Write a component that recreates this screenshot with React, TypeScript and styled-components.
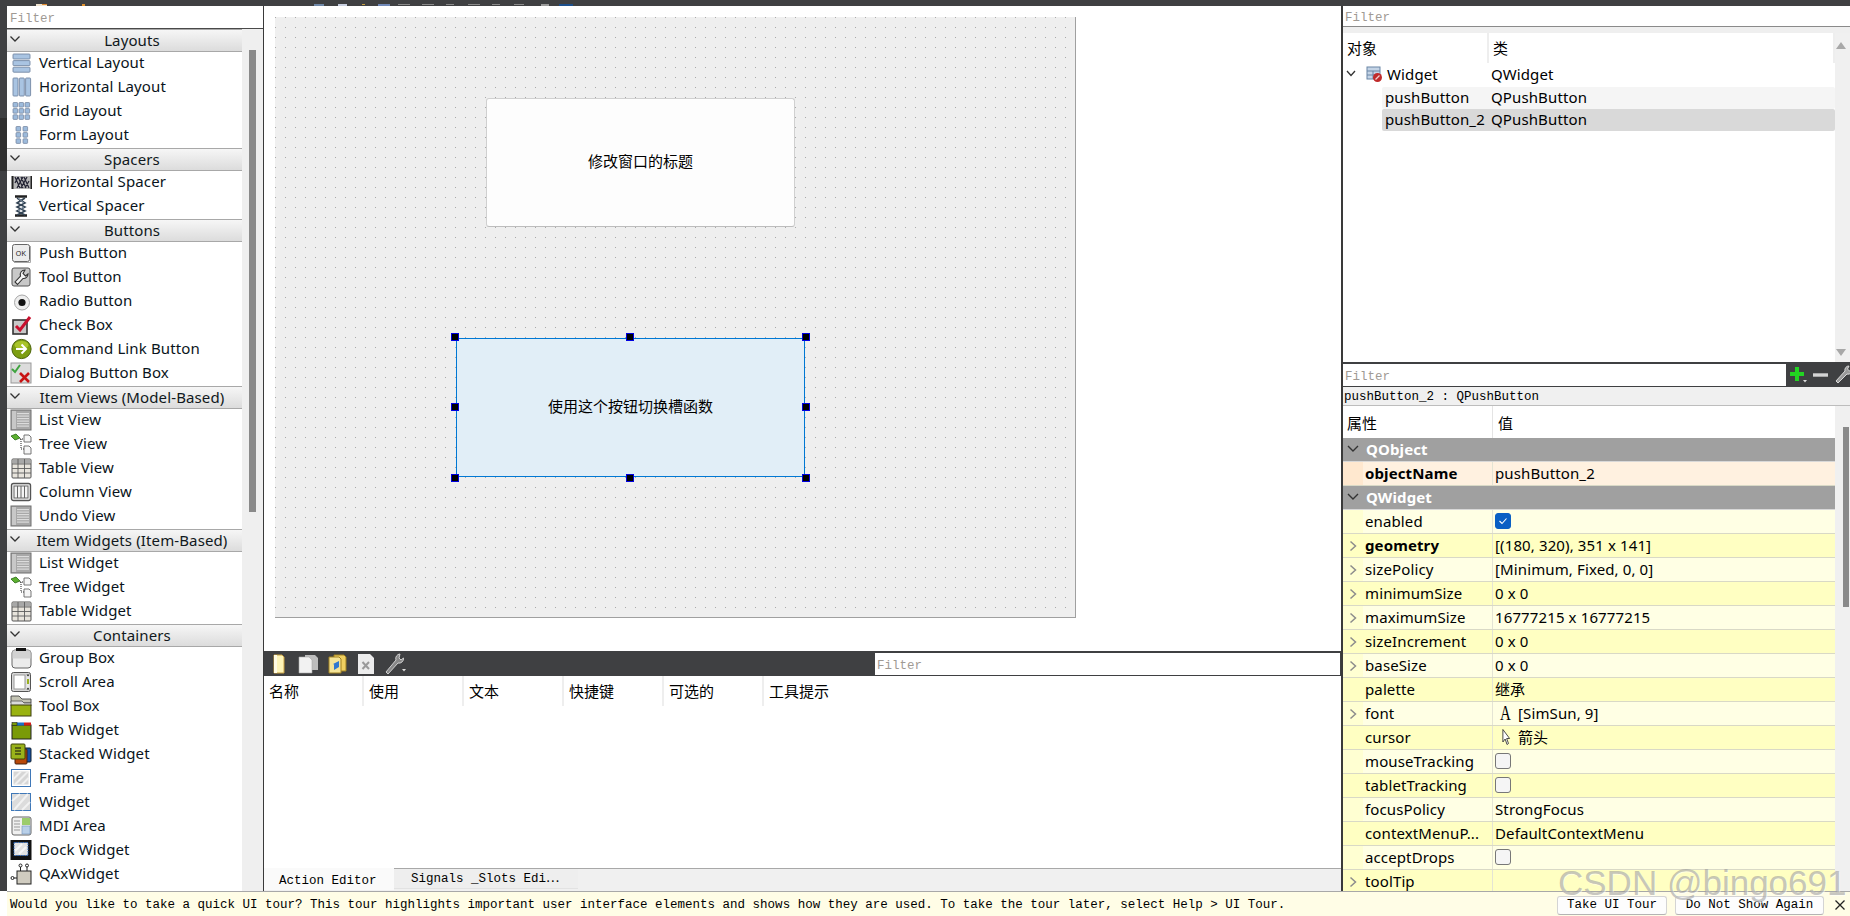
import React from 'react';
import styled, { createGlobalStyle } from 'styled-components';

const UI = `"Noto Sans", "Noto Sans CJK SC", sans-serif`;
const MONO = `"Liberation Mono", "Noto Sans CJK SC", monospace`;
const CJK = `"Noto Sans CJK SC", sans-serif`;

const Global = createGlobalStyle`
  html, body { margin: 0; padding: 0; background: #fff; overflow: hidden; }
  * { box-sizing: border-box; }
`;

const Page = styled.div`
  position: relative;
  width: 1850px;
  height: 916px;
  display: flex;
  flex-direction: column;
  overflow: hidden;
  background: #fff;
  color: #000;
  font: 15px/20px ${UI};
  letter-spacing: 0.12px;
`;
const TopBar = styled.div`
  height: 6px;
  flex: none;
  background: #3f4042;
  line-height: 0;
`;
const Body = styled.div`
  height: 885px;
  flex: none;
  display: flex;
`;
const Strip = styled.div`
  width: 7px;
  flex: none;
  background: linear-gradient(#3f4042 0 112px, #2f2f2f 112px 165px, #3f4042 165px);
`;

/* Widget box */
const WidgetBox = styled.aside`
  width: 257px;
  flex: none;
  display: flex;
  flex-direction: column;
  border-right: 1px solid #3a3a3a;
  background: #fff;
`;
const FilterInput = styled.input`
  display: block;
  width: 100%;
  height: 100%;
  border: 0;
  outline: 0;
  padding: 3px 0 0 2px;
  background: #fff;
  font: 12.5px ${MONO};
  letter-spacing: 0;
  &::placeholder { color: #a09a94; opacity: 1; }
`;
const BoxFilter = styled.div`
  height: 22px;
  flex: none;
  padding-left: 1px;
  border-bottom: 1px solid #4a4a4a;
  margin-top: 1px;
`;
const BoxBody = styled.div`
  flex: 1;
  display: flex;
  min-height: 0;
`;
const BoxList = styled.div`
  width: 235px;
  flex: none;
`;
const BoxScroll = styled.div`
  flex: 1;
  background: #efefef;
  padding: 21px 7px 0 7px;
`;
const Thumb = styled.div<{ $h: number }>`
  height: ${p => p.$h}px;
  background: #8a8a8a;
`;
const CategoryHead = styled.div`
  height: 23px;
  display: flex;
  align-items: center;
  background: linear-gradient(#f6f6f6, #dcdcdc);
  border-top: 1px solid #a8a8a8;
  border-bottom: 1px solid #a8a8a8;
  color: #101820;
`;
const Chevron = styled.svg`
  width: 15px;
  height: 12px;
  flex: none;
  margin-top: -3px;
`;
const CategoryTitle = styled.span`
  flex: 1;
  text-align: center;
  margin-bottom: 2px;
`;
const ToolRow = styled.div`
  height: 24px;
  display: flex;
  align-items: center;
  padding-left: 3px;
  gap: 7px;
  color: #0a1420;
  white-space: nowrap;
`;
const ToolLabel = styled.span`
  margin-bottom: 4px;
`;
const IconBox = styled.svg`
  width: 22px;
  height: 22px;
  flex: none;
  margin-bottom: 2px;
`;

/* Center */
const Center = styled.main`
  width: 1077px;
  flex: none;
  display: flex;
  flex-direction: column;
`;
const FormArea = styled.div`
  height: 645px;
  flex: none;
  padding: 11px 0 0 11px;
`;
const Form = styled.div`
  position: relative;
  width: 801px;
  height: 601px;
  background-color: #efefef;
  background-image: conic-gradient(at 1px 1px, #efefef 75%, #a9a9a9 0);
  background-size: 10px 10px;
  border-right: 1px solid #a0a0a0;
  border-bottom: 1px solid #a0a0a0;
`;
const FormButton = styled.div<{ $x: number; $y: number; $w: number; $h: number; $selected?: boolean }>`
  position: absolute;
  left: ${p => p.$x}px;
  top: ${p => p.$y}px;
  width: ${p => p.$w}px;
  height: ${p => p.$h}px;
  display: flex;
  align-items: center;
  justify-content: center;
  padding-bottom: 4px;
  font: 15px/20px ${CJK};
  letter-spacing: 0;
  border-radius: ${p => (p.$selected ? 0 : 3)}px;
  border: 1px solid ${p => (p.$selected ? '#0078d4' : '#d0d0d0')};
  border-bottom-color: ${p => (p.$selected ? '#0078d4' : '#bdbdbd')};
  background: ${p => (p.$selected ? '#e1eef7' : '#fdfdfd')};
`;
const Handle = styled.span<{ $x: number; $y: number }>`
  position: absolute;
  left: ${p => p.$x - 3}px;
  top: ${p => p.$y - 3}px;
  width: 6px;
  height: 6px;
  background: #000;
  outline: 1px solid #0000e0;
`;
const ActionEditor = styled.section`
  flex: 1;
  display: flex;
  flex-direction: column;
  min-height: 0;
`;
const ActionBar = styled.div`
  height: 25px;
  flex: none;
  display: flex;
  align-items: stretch;
  background: #3f4042;
  padding-top: 2px;
  border-bottom: 1px solid #3f4042;
`;
const ActionTools = styled.div`
  width: 611px;
  flex: none;
  display: flex;
  align-items: center;
  gap: 7px;
  padding-left: 4px;
`;
const ToolIcon = styled.svg`
  width: 22px;
  height: 22px;
  flex: none;
`;
const ActionFilter = styled.div`
  flex: 1;
  margin-right: 1px;
`;
const ColumnHead = styled.div`
  height: 30px;
  flex: none;
  display: flex;
`;
const ColumnCell = styled.div<{ $last?: boolean }>`
  width: 100px;
  flex: none;
  padding: 5px 0 0 5px;
  border-right: 2px solid ${p => (p.$last ? 'transparent' : '#eeeeee')};
  font-family: ${CJK};
  font-size: 15px;
  letter-spacing: 0;
  line-height: 20px;
`;
const ActionEmpty = styled.div`
  flex: 1;
`;
const TabBar = styled.div`
  height: 23px;
  flex: none;
  display: flex;
  background: #f0f0f0;
  border-top: 1px solid #a8a8a8;
  font: 12.5px/20px ${MONO};
  letter-spacing: 0;
`;
const Tab = styled.div<{ $active?: boolean; $w: number }>`
  width: ${p => p.$w}px;
  height: ${p => (p.$active ? 22 : 20)}px;
  margin-top: ${p => (p.$active ? -1 : 0)}px;
  padding: ${p => (p.$active ? 3 : 0)}px 0 0 ${p => (p.$active ? 15 : 17)}px;
  background: ${p => (p.$active ? '#fafafa' : '#eeeeee')};
  border-bottom: ${p => (p.$active ? 0 : 1)}px solid #e2e2e2;
  white-space: nowrap;
`;

/* Right column */
const RightCol = styled.aside`
  flex: 1;
  min-width: 0;
  display: flex;
  flex-direction: column;
  border-left: 2px solid #3a3a3a;
`;
const InspectorFilter = styled.div`
  height: 21px;
  flex: none;
  border-bottom: 1px solid #8a8a8a;
`;
const InspectorGap = styled.div`
  height: 6px;
  flex: none;
  background: #efefef;
`;
const Inspector = styled.div`
  height: 331px;
  flex: none;
  display: flex;
  border-bottom: 2px solid #3f4042;
`;
const TreePane = styled.div`
  width: 492px;
  flex: none;
`;
const Scroll = styled.div`
  flex: 1;
  position: relative;
  background: #f0f0f0;
`;
const Arrow = styled.span<{ $down?: boolean }>`
  position: absolute;
  left: 1px;
  ${p => (p.$down ? 'bottom: 6px;' : 'top: 9px;')}
  width: 0;
  height: 0;
  border-left: 5px solid transparent;
  border-right: 5px solid transparent;
  ${p => (p.$down ? 'border-top: 7px solid #a8a8a8;' : 'border-bottom: 7px solid #a8a8a8;')}
`;
const PropThumb = styled.div`
  position: absolute;
  left: 8px;
  top: 21px;
  width: 6px;
  height: 180px;
  background: #8a8a8a;
`;
const TreeHead = styled.div`
  height: 30px;
  display: flex;
  font-family: ${CJK};
`;
const TreeHeadCell = styled.div<{ $w: number; $pad: number }>`
  width: ${p => p.$w}px;
  flex: none;
  padding: 5px 0 0 ${p => p.$pad}px;
  border-right: 2px solid #eeeeee;
  font-size: 15px;
  letter-spacing: 0;
`;
const TreeRow = styled.div<{ $bg?: string; $indent: number; $h?: number; $pad?: number }>`
  height: ${p => p.$h ?? 22}px;
  margin-left: ${p => p.$indent}px;
  padding: 0 0 2px ${p => p.$pad ?? 0}px;
  display: flex;
  align-items: center;
  background: ${p => p.$bg || 'transparent'};
  border-radius: 2px;
  white-space: nowrap;
`;
const TreeName = styled.span<{ $w: number }>`
  width: ${p => p.$w}px;
  flex: none;
`;
const TreeExpand = styled.svg`
  width: 12px;
  height: 10px;
  flex: none;
  margin: 0 8px 0 2px;
`;
const TreeIcon = styled.svg`
  width: 18px;
  height: 18px;
  flex: none;
  margin-right: 4px;
`;
const PropToolbar = styled.div`
  height: 23px;
  flex: none;
  display: flex;
  background: #3f4042;
  border-bottom: 1px solid #3f4042;
`;
const PropFilter = styled.div`
  width: 443px;
  flex: none;
`;
const PropTools = styled.div`
  flex: 1;
  display: flex;
  align-items: center;
  gap: 3px;
  padding-left: 2px;
  overflow: hidden;
`;
const PropIcon = styled.svg`
  width: 20px;
  height: 20px;
  flex: none;
`;
const PropLabel = styled.div`
  height: 19px;
  flex: none;
  padding: 2px 0 0 1px;
  background: #f0f0f0;
  border-bottom: 1px solid #bdbdbd;
  font: 12.5px/16px ${MONO};
  letter-spacing: 0;
  white-space: nowrap;
`;
const PropBody = styled.div`
  flex: 1;
  min-height: 0;
  display: flex;
  overflow: hidden;
`;
const PropPane = styled.div`
  width: 492px;
  flex: none;
`;
const PropHead = styled.div`
  height: 32px;
  display: flex;
  font-family: ${CJK};
  font-size: 15px;
  letter-spacing: 0;
`;
const PropHeadCell = styled.div<{ $w?: number; $pad: number }>`
  ${p => (p.$w ? `width: ${p.$w}px; flex: none; border-right: 1px solid #e4e4e4;` : 'flex: 1;')}
  padding: 7px 0 0 ${p => p.$pad}px;
`;
const Section = styled.div`
  height: 24px;
  display: flex;
  align-items: center;
  background: #a0a0a0;
  border-bottom: 1px solid #d8d8d8;
  color: #fff;
  font-weight: 700;
  padding-bottom: 1px;
`;
const SectionChevron = styled.svg`
  width: 20px;
  height: 10px;
  flex: none;
  margin-right: 3px;
`;
const PropRow = styled.div<{ $bg: string }>`
  height: 24px;
  display: flex;
  background: ${p => p.$bg};
  border-bottom: 1px solid #d9d9c6;
`;
const Gutter = styled.div<{ $bg: string }>`
  width: 20px;
  flex: none;
  display: flex;
  align-items: center;
  justify-content: center;
  background: ${p => p.$bg};
`;
const PropName = styled.div<{ $bold?: boolean }>`
  width: 130px;
  flex: none;
  padding-left: 2px;
  border-right: 1px solid #e4e4d4;
  line-height: 22px;
  white-space: nowrap;
  overflow: hidden;
  font-weight: ${p => (p.$bold ? 700 : 400)};
`;
const PropValue = styled.div`
  flex: 1;
  display: flex;
  align-items: center;
  padding-left: 2px;
  padding-bottom: 1px;
  white-space: nowrap;
`;
const Check = styled.span<{ $on?: boolean }>`
  width: 16px;
  height: 16px;
  display: inline-flex;
  align-items: center;
  justify-content: center;
  border-radius: 3px;
  background: ${p => (p.$on ? '#0a5fc4' : '#f5f5f5')};
  border: 1px solid ${p => (p.$on ? '#0a5fc4' : '#777')};
`;
const ValueGlyph = styled.span`
  width: 21px;
  flex: none;
  display: inline-flex;
  justify-content: center;
  margin-right: 2px;
  font: 20px/20px "Liberation Serif", serif;
  transform: scaleX(0.75);
`;

/* Tour bar */
const TourBar = styled.footer`
  height: 25px;
  flex: none;
  margin-left: 7px;
  display: flex;
  align-items: center;
  background: #fffde6;
  border-top: 1px solid #a8a8a8;
  padding: 2px 0 0 3px;
  font: 12.5px/20px ${MONO};
  letter-spacing: 0;
  white-space: nowrap;
`;
const TourText = styled.span`
  flex: 1;
`;
const TourButton = styled.span<{ $w: number; $gap: number }>`
  width: ${p => p.$w}px;
  height: 19px;
  margin-right: ${p => p.$gap}px;
  display: inline-flex;
  align-items: center;
  justify-content: center;
  background: #fdfdfd;
  border: 1px solid #d4d4d4;
  border-bottom-color: #b4b4b4;
  border-radius: 3px;
`;
const TourClose = styled.svg`
  width: 12px;
  height: 12px;
  margin-right: 4px;
  flex: none;
`;
const Watermark = styled.div`
  position: absolute;
  left: 1558px;
  top: 865px;
  font: 35px/36px "Liberation Sans", sans-serif;
  letter-spacing: 0;
  color: rgba(150, 150, 150, 0.55);
  text-shadow: 1px 1px 0 rgba(255, 255, 255, 0.5);
  white-space: nowrap;
  pointer-events: none;
`;

const ChevronDown = ({ color = '#333' }: { color?: string }) => (
  <Chevron viewBox="0 0 15 12"><path d="M3.5 3.5 L8 8 L12.5 3.5" fill="none" stroke={color} strokeWidth="1.3" /></Chevron>
);
const ChevronRight = () => (
  <svg width="8" height="12" viewBox="0 0 8 12"><path d="M1.5 1.5 L6.5 6 L1.5 10.5" fill="none" stroke="#8c8c8c" strokeWidth="1.5" /></svg>
);

const listLines = (
  <g>
    <rect x="1" y="1" width="20" height="20" fill="#a8a8a8" stroke="#6e6e6e" />
    <rect x="2" y="2" width="4" height="18" fill="#c8c8c8" />
    {[4, 6.5, 9, 11.5, 14, 16.5].map(y => <rect key={y} x="7" y={y} width="12" height="1.2" fill="#dcdcdc" />)}
  </g>
);
const treeArt = (
  <g>
    <path d="M1 3 L6 1 L10 5 L5 7 Z" fill="#5cb030" stroke="#2b6a16" strokeWidth="0.8" />
    <path d="M10 6 H13 M11 6 V16 M11 16 H14" stroke="#222" strokeWidth="1" strokeDasharray="1 1" fill="none" />
    <path d="M14 2 H19 L21 4 V9 H14 Z M14 13 H19 L21 15 V21 H14 Z" fill="#f6f6f6" stroke="#666" strokeWidth="0.9" />
  </g>
);
const tableArt = (
  <g>
    <rect x="2" y="2" width="19" height="19" rx="1" fill="#e8e4dc" stroke="#555" />
    <rect x="2.5" y="2.5" width="18" height="4" fill="#a8a8a8" />
    <path d="M2 7 H21 M2 11.5 H21 M2 16 H21 M8 2 V21 M14.5 2 V21" stroke="#5c5c5c" strokeWidth="0.9" />
  </g>
);
const squares = (xs: number[], ys: number[], s: number) => (
  <g>
    {xs.map(x => ys.map(y => <rect key={`${x}-${y}`} x={x} y={y} width={s} height={s} rx="0.7" fill="#9dbbdc" stroke="#70809a" strokeWidth="0.7" />))}
  </g>
);

const ICONS: Record<string, React.ReactNode> = {
  vlayout: (
    <g fill="#a9c4e2" stroke="#7488a4" strokeWidth="0.9">
      <rect x="3" y="2" width="17" height="5" rx="0.8" />
      <rect x="3" y="8.6" width="17" height="5" rx="0.8" />
      <rect x="3" y="15.2" width="17" height="5" rx="0.8" />
    </g>
  ),
  hlayout: (
    <g fill="#a9c4e2" stroke="#7488a4" strokeWidth="0.9">
      <rect x="3" y="2" width="5" height="18" rx="0.8" />
      <rect x="9.3" y="2" width="5" height="18" rx="0.8" />
      <rect x="15.6" y="2" width="5" height="18" rx="0.8" />
    </g>
  ),
  grid: squares([3, 9, 15], [2.5, 8.6, 14.8], 4.6),
  form: squares([6, 13], [2.5, 8.6, 14.8], 4.6),
  hspacer: (
    <g>
      <rect x="2" y="5" width="20" height="13" fill="#b8b8b8" />
      <path d="M2.5 5 V18 M21.5 5 V18" stroke="#222" strokeWidth="2" />
      <path d="M5 6 L10 17 M8 6 L13 17 M11 6 L16 17 M14 6 L19 17 M5 12 L8 6 M7 17 L13 6 M11 17 L17 6 M15 17 L19 10" stroke="#223" strokeWidth="1.2" fill="none" />
    </g>
  ),
  vspacer: (
    <g>
      <path d="M5 1.5 H17 M5 20.5 H17" stroke="#222" strokeWidth="2.4" />
      <path d="M7 3 L15 8 L7 12 L15 16 L7 20 M15 3 L7 8 L15 12 L7 16 L15 20" stroke="#345" strokeWidth="1.6" fill="none" />
      <path d="M8 3 L14 8 M14 12 L8 16" stroke="#9ab" strokeWidth="0.8" fill="none" />
    </g>
  ),
  push: (
    <g>
      <rect x="2.5" y="2.5" width="17" height="17" rx="2" fill="#ececec" stroke="#666" />
      <path d="M20.5 4 V20.5 H4" stroke="#aaa" fill="none" />
      <text x="11" y="14" textAnchor="middle" fontFamily="Liberation Sans" fontSize="7" fill="#222">OK</text>
    </g>
  ),
  tool: (
    <g>
      <rect x="2" y="2" width="18" height="18" rx="2" fill="#c8c8c8" stroke="#555" />
      <path d="M15 4 A4.5 4.5 0 0 0 10.5 10 L5 16 L7.5 18.5 L13 12.5 A4.5 4.5 0 0 0 18 8 L15.5 10 L13 7.5 Z" fill="#f4f4f4" stroke="#333" strokeWidth="1.1" />
    </g>
  ),
  radio: (
    <g>
      <circle cx="12" cy="12.5" r="7.5" fill="#eeeeee" stroke="#a8a8a8" />
      <circle cx="12" cy="12.5" r="3.6" fill="#111" />
    </g>
  ),
  check: (
    <g>
      <rect x="3" y="6" width="14" height="14" fill="#c8c8c8" stroke="#333" strokeWidth="1.6" />
      <path d="M6 12 L10 16 L20 3" fill="none" stroke="#c8102e" strokeWidth="3" />
    </g>
  ),
  link: (
    <g>
      <circle cx="11.5" cy="11" r="9.6" fill="#7d9e12" stroke="#4a6207" />
      <ellipse cx="11.5" cy="7" rx="7" ry="4" fill="#a9c42a" />
      <path d="M6 11 H15.5 M11.5 6.5 L16 11 L11.5 15.5" fill="none" stroke="#fff" strokeWidth="2" />
    </g>
  ),
  dialog: (
    <g>
      <rect x="1" y="1" width="20" height="20" fill="#dcdcdc" stroke="#999" />
      <path d="M2 7 L5 10 L10 3" fill="none" stroke="#3fa43f" strokeWidth="2" />
      <path d="M10 11 L19 20 M19 11 L10 20" stroke="#c81414" strokeWidth="2.6" />
    </g>
  ),
  list: listLines,
  tree: treeArt,
  table: tableArt,
  column: (
    <g>
      <rect x="1.5" y="2.5" width="19" height="17" rx="2" fill="#f4f4f4" stroke="#555" strokeWidth="1.4" />
      <path d="M7.5 5 V17 M11 5 V17 M14.5 5 V17" stroke="#666" />
      <rect x="4" y="5" width="14" height="12" fill="none" stroke="#666" />
    </g>
  ),
  group: (
    <g>
      <rect x="2" y="3" width="19" height="18" rx="3" fill="#ececec" stroke="#666" />
      <rect x="2.5" y="3.5" width="18" height="8" fill="#d2d2d2" />
      <rect x="6" y="1" width="10" height="3" fill="#111" />
    </g>
  ),
  scroll: (
    <g>
      <rect x="1.5" y="1.5" width="19" height="19" rx="2" fill="#d8d8d8" stroke="#555" />
      <rect x="4" y="4" width="11" height="14" fill="#fff" stroke="#999" />
      <rect x="16.5" y="5" width="3" height="12" fill="#e8e8e8" />
      <path d="M18 8 V13" stroke="#9ab020" strokeWidth="2" />
      <path d="M16.5 3.5 H19.5 L18 5.5 Z M16.5 18.5 H19.5 L18 16.5 Z" fill="#222" />
    </g>
  ),
  toolbox: (
    <g>
      <path d="M1 1 H9 L12 4 H21 V8 H1 Z" fill="#c4c4b4" stroke="#444" strokeWidth="0.9" />
      <path d="M1 6 H12 L14 8 H21 V11 H1 Z" fill="#dadada" stroke="#555" strokeWidth="0.8" />
      <rect x="1" y="10" width="20" height="11" fill="#99b210" stroke="#3c3c10" />
    </g>
  ),
  tab: (
    <g>
      <rect x="2" y="6" width="19" height="14" fill="#7a9a08" stroke="#222" />
      <rect x="7" y="3.5" width="7" height="3" fill="#1d6fc8" />
      <rect x="14" y="3.5" width="7" height="3" fill="#d2201c" />
      <rect x="2" y="3.5" width="5" height="3" fill="#7a9a08" stroke="#222" strokeWidth="0.6" />
    </g>
  ),
  stacked: (
    <g>
      <rect x="10" y="5" width="11" height="14" rx="1" fill="#1450a8" stroke="#123" />
      <rect x="5" y="6" width="12" height="15" rx="1" fill="#b84808" stroke="#421" />
      <rect x="1" y="1" width="14" height="15" rx="1" fill="#9ab31a" stroke="#3c4408" />
      <path d="M5 5 H11 M5 8 H11 M5 11 H11" stroke="#111" strokeWidth="1.2" />
    </g>
  ),
  frame: (
    <g>
      <rect x="1.5" y="2.5" width="19" height="17" fill="#fff" stroke="#3f78b8" />
      <rect x="3.5" y="4.5" width="15" height="13" fill="#d6d6d6" />
      <path d="M3.5 12 L11 4.5 M5 17.5 L18 4.5 M12 17.5 L18.5 11" stroke="#f0f0f0" strokeWidth="2" />
    </g>
  ),
  widget: (
    <g>
      <rect x="1.5" y="2.5" width="19" height="17" fill="#dcdcdc" stroke="#3f78b8" />
      <path d="M2 10 L10 3 M4 19 L18 3 M12 19 L20 11" stroke="#f2f2f2" strokeWidth="2" />
    </g>
  ),
  mdi: (
    <g>
      <rect x="2" y="2" width="19" height="18" rx="2" fill="#f0f0f0" stroke="#666" />
      <rect x="12" y="3" width="8" height="7" fill="#9ccc6c" />
      <rect x="12" y="11" width="8" height="8" fill="#b8cfe8" stroke="#6f90b8" strokeWidth="0.6" />
      <path d="M4 6 H10 M4 9 H10 M4 12 H10 M4 15 H10" stroke="#999" />
    </g>
  ),
  dock: (
    <g>
      <rect x="0.5" y="1" width="21" height="20" fill="#111" />
      <rect x="4" y="3.5" width="14" height="13" fill="#e2e2e2" stroke="#2b62b0" strokeDasharray="1.5 1" />
      <path d="M5 12 L12 5 M9 15 L16 8" stroke="#f6f6f6" strokeWidth="2" />
    </g>
  ),
  qax: (
    <g>
      <rect x="7" y="8" width="14" height="13" fill="#d0ccc0" stroke="#222" />
      <path d="M10.5 8 V3 M17 8 V3" stroke="#222" />
      <circle cx="10.5" cy="2.5" r="1.5" fill="#fff" stroke="#222" />
      <circle cx="17" cy="2.5" r="1.5" fill="#fff" stroke="#222" />
      <path d="M7 15 H3" stroke="#222" />
      <circle cx="2.5" cy="15" r="1.5" fill="#fff" stroke="#222" />
    </g>
  ),
};

const CATEGORIES: { title: string; items: [string, string][] }[] = [
  { title: 'Layouts', items: [['vlayout', 'Vertical Layout'], ['hlayout', 'Horizontal Layout'], ['grid', 'Grid Layout'], ['form', 'Form Layout']] },
  { title: 'Spacers', items: [['hspacer', 'Horizontal Spacer'], ['vspacer', 'Vertical Spacer']] },
  { title: 'Buttons', items: [['push', 'Push Button'], ['tool', 'Tool Button'], ['radio', 'Radio Button'], ['check', 'Check Box'], ['link', 'Command Link Button'], ['dialog', 'Dialog Button Box']] },
  { title: 'Item Views (Model-Based)', items: [['list', 'List View'], ['tree', 'Tree View'], ['table', 'Table View'], ['column', 'Column View'], ['list', 'Undo View']] },
  { title: 'Item Widgets (Item-Based)', items: [['list', 'List Widget'], ['tree', 'Tree Widget'], ['table', 'Table Widget']] },
  { title: 'Containers', items: [['group', 'Group Box'], ['scroll', 'Scroll Area'], ['toolbox', 'Tool Box'], ['tab', 'Tab Widget'], ['stacked', 'Stacked Widget'], ['frame', 'Frame'], ['widget', 'Widget'], ['mdi', 'MDI Area'], ['dock', 'Dock Widget'], ['qax', 'QAxWidget']] },
];

const LIGHT = '#ffffe4';
const DARK = '#ffffc2';
const GUT_L = '#ffffd2';

type Prop = { name: string; value?: string; bold?: boolean; expand?: boolean; check?: boolean | null; glyph?: 'font' | 'cursor' };
const PROPS: Prop[] = [
  { name: 'enabled', check: true },
  { name: 'geometry', value: '[(180, 320), 351 x 141]', bold: true, expand: true },
  { name: 'sizePolicy', value: '[Minimum, Fixed, 0, 0]', expand: true },
  { name: 'minimumSize', value: '0 x 0', expand: true },
  { name: 'maximumSize', value: '16777215 x 16777215', expand: true },
  { name: 'sizeIncrement', value: '0 x 0', expand: true },
  { name: 'baseSize', value: '0 x 0', expand: true },
  { name: 'palette', value: '继承' },
  { name: 'font', value: '[SimSun, 9]', expand: true, glyph: 'font' },
  { name: 'cursor', value: '箭头', glyph: 'cursor' },
  { name: 'mouseTracking', check: false },
  { name: 'tabletTracking', check: false },
  { name: 'focusPolicy', value: 'StrongFocus' },
  { name: 'contextMenuP...', value: 'DefaultContextMenu' },
  { name: 'acceptDrops', check: false },
  { name: 'toolTip', value: '', expand: true },
];

const HANDLES: [number, number][] = [
  [180, 320], [355, 320], [531, 320],
  [180, 390], [531, 390],
  [180, 461], [355, 461], [531, 461],
];

const Plus = () => (
  <PropIcon viewBox="0 0 20 20">
    <path d="M9 2 V16 M2 9 H16" stroke="#22d422" strokeWidth="4" />
    <path d="M15 15 H19 L17 17.5 Z" fill="#ddd" />
  </PropIcon>
);
const Minus = () => (
  <PropIcon viewBox="0 0 20 20"><path d="M2 10 H17" stroke="#d4d4d4" strokeWidth="3.4" /></PropIcon>
);
const Wrench = () => (
  <PropIcon viewBox="0 0 20 20">
    <path d="M15 1 A4 4 0 0 0 11 6 L2 16 L4 18 L13 9 A4 4 0 0 0 18 4 L15.5 6 L13.5 4 Z" fill="#9a9a9a" stroke="#d8d8d8" strokeWidth="1" />
    <path d="M16 14 H20 L18 16.5 Z" fill="#ddd" />
  </PropIcon>
);

export default function App() {
  return (
    <Page>
      <Global />
      <TopBar>
        <svg width="1100" height="2" viewBox="0 0 1100 2">
          <rect x="36" width="11" height="2" fill="#f0e4d0" />
          <rect x="42" width="5" height="1" fill="#e08a30" />
          <rect x="82" width="3" height="2" fill="#e0902c" />
          <rect x="314" width="10" height="2" fill="#6f88a8" />
          <rect x="338" width="9" height="2" fill="#c8cfe0" />
          <rect x="362" width="3" height="1" fill="#c8a040" />
          <rect x="378" width="12" height="2" fill="#7088b8" />
          <rect x="398" width="12" height="1" fill="#8a8a8a" />
          <rect x="422" width="12" height="1" fill="#8a8a8a" />
          <rect x="446" width="8" height="1" fill="#8a8a8a" />
          <rect x="468" width="12" height="1" fill="#8a8a8a" />
          <rect x="492" width="8" height="1" fill="#8a8a8a" />
          <rect x="514" width="10" height="1" fill="#8a8a8a" />
          <rect x="541" width="8" height="2" fill="#9a9a9a" />
          <rect x="559" width="14" height="2" fill="#1c4f8c" />
        </svg>
      </TopBar>
      <Body>
        <Strip />
        <WidgetBox>
          <BoxFilter><FilterInput placeholder="Filter" readOnly /></BoxFilter>
          <BoxBody>
            <BoxList>
              {CATEGORIES.map(cat => (
                <div key={cat.title}>
                  <CategoryHead>
                    <ChevronDown />
                    <CategoryTitle>{cat.title}</CategoryTitle>
                  </CategoryHead>
                  {cat.items.map(([icon, label]) => (
                    <ToolRow key={label}>
                      <IconBox viewBox="0 0 22 22">{ICONS[icon]}</IconBox>
                      <ToolLabel>{label}</ToolLabel>
                    </ToolRow>
                  ))}
                </div>
              ))}
            </BoxList>
            <BoxScroll><Thumb $h={462} /></BoxScroll>
          </BoxBody>
        </WidgetBox>

        <Center>
          <FormArea>
            <Form>
              <FormButton $x={211} $y={81} $w={309} $h={129}>修改窗口的标题</FormButton>
              <FormButton $x={181} $y={321} $w={349} $h={139} $selected>使用这个按钮切换槽函数</FormButton>
              {HANDLES.map(([x, y]) => <Handle key={`${x}-${y}`} $x={x} $y={y} />)}
            </Form>
          </FormArea>
          <ActionEditor>
            <ActionBar>
              <ActionTools>
                <ToolIcon viewBox="0 0 22 22">
                  <path d="M6 2 H14 L16 4 V20 H6 Z" fill="#fdf4b8" stroke="#c8a040" />
                  <path d="M6 2 H9 V20 H6 Z" fill="#fffbe4" />
                </ToolIcon>
                <ToolIcon viewBox="0 0 22 22">
                  <path d="M8 2 H18 L21 5 V17 H8 Z" fill="#bdbdbd" />
                  <path d="M2 4 H12 L15 7 V20 H2 Z" fill="#f2f2f2" stroke="#aaa" strokeWidth="0.6" />
                </ToolIcon>
                <ToolIcon viewBox="0 0 22 22">
                  <path d="M8 2 H18 L20 4 V18 H8 Z" fill="#f0d060" stroke="#a08020" />
                  <path d="M3 4 H13 L15 6 V20 H3 Z" fill="#f4e498" stroke="#a08020" />
                  <path d="M7 11 L13 8 L13 14 Z M13 14 L8 17 L8 11 Z" fill="#2f78d0" />
                </ToolIcon>
                <ToolIcon viewBox="0 0 22 22">
                  <path d="M3 1 H15 L19 5 V21 H3 Z" fill="#ececec" />
                  <path d="M7.5 9 L14 16 M14 9 L7.5 16" stroke="#9a9a9a" strokeWidth="2" />
                </ToolIcon>
                <ToolIcon viewBox="0 0 22 22">
                  <path d="M16 1 A4.5 4.5 0 0 0 12 7 L2 19 L4 21 L14 10 A4.5 4.5 0 0 0 19.5 5 L17 7 L15 5 Z" fill="#888" stroke="#cfcfcf" strokeWidth="1" />
                  <path d="M18 16 H22 L20 18.5 Z" fill="#ddd" />
                </ToolIcon>
              </ActionTools>
              <ActionFilter><FilterInput placeholder="Filter" readOnly /></ActionFilter>
            </ActionBar>
            <ColumnHead>
              {['名称', '使用', '文本', '快捷键', '可选的', '工具提示'].map((t, i) => <ColumnCell key={t} $last={i === 5}>{t}</ColumnCell>)}
            </ColumnHead>
            <ActionEmpty />
            <TabBar>
              <Tab $active $w={130}>Action Editor</Tab>
              <Tab $w={184}>Signals _Slots Edi⋯</Tab>
            </TabBar>
          </ActionEditor>
        </Center>

        <RightCol>
          <InspectorFilter><FilterInput placeholder="Filter" readOnly /></InspectorFilter>
          <InspectorGap />
          <Inspector>
            <TreePane>
              <TreeHead>
                <TreeHeadCell $w={146} $pad={4}>对象</TreeHeadCell>
                <TreeHeadCell $w={346} $pad={4}>类</TreeHeadCell>
              </TreeHead>
              <TreeRow $indent={0} $h={24}>
                <TreeExpand viewBox="0 0 12 10"><path d="M2 2 L6 6.5 L10 2" fill="none" stroke="#333" strokeWidth="1.3" /></TreeExpand>
                <TreeIcon viewBox="0 0 18 18">
                  <rect x="2" y="2" width="13" height="12" fill="#c4d4e6" stroke="#6a86a6" />
                  <path d="M2 6 H15 M2 10 H15 M8 6 V14" stroke="#6a86a6" />
                  <circle cx="12.5" cy="12.5" r="4.5" fill="#c02a2a" />
                  <path d="M10.5 14.5 L14.5 10.5" stroke="#f2d0d0" strokeWidth="1.2" />
                </TreeIcon>
                <TreeName $w={104}>Widget</TreeName>
                QWidget
              </TreeRow>
              <TreeRow $indent={39} $pad={3} $bg="#f5f5f5">
                <TreeName $w={106}>pushButton</TreeName>
                QPushButton
              </TreeRow>
              <TreeRow $indent={39} $pad={3} $bg="#d9d9d9">
                <TreeName $w={106}>pushButton_2</TreeName>
                QPushButton
              </TreeRow>
            </TreePane>
            <Scroll>
              <Arrow />
              <Arrow $down />
            </Scroll>
          </Inspector>
          <PropToolbar>
            <PropFilter><FilterInput placeholder="Filter" readOnly /></PropFilter>
            <PropTools>
              <Plus />
              <Minus />
              <Wrench />
            </PropTools>
          </PropToolbar>
          <PropLabel>pushButton_2 : QPushButton</PropLabel>
          <PropBody>
            <PropPane>
              <PropHead>
                <PropHeadCell $w={150} $pad={4}>属性</PropHeadCell>
                <PropHeadCell $pad={5}>值</PropHeadCell>
              </PropHead>
              <Section>
                <SectionChevron viewBox="0 0 20 10"><path d="M5 2 L10 7 L15 2" fill="none" stroke="#333" strokeWidth="1.4" /></SectionChevron>
                QObject
              </Section>
              <PropRow $bg="#fff1e0">
                <Gutter $bg="#ffe8cf" />
                <PropName $bold>objectName</PropName>
                <PropValue>pushButton_2</PropValue>
              </PropRow>
              <Section>
                <SectionChevron viewBox="0 0 20 10"><path d="M5 2 L10 7 L15 2" fill="none" stroke="#333" strokeWidth="1.4" /></SectionChevron>
                QWidget
              </Section>
              {PROPS.map((p, i) => {
                const bg = i % 2 === 0 ? LIGHT : DARK;
                return (
                  <PropRow key={p.name} $bg={bg}>
                    <Gutter $bg={i % 2 === 0 ? GUT_L : DARK}>{p.expand && <ChevronRight />}</Gutter>
                    <PropName $bold={p.bold}>{p.name}</PropName>
                    <PropValue>
                      {p.check !== undefined && p.check !== null && (
                        <Check $on={p.check}>
                          {p.check && <svg width="10" height="10" viewBox="0 0 10 10"><path d="M1.5 5 L4 7.5 L8.5 2.5" fill="none" stroke="#fff" strokeWidth="1.1" /></svg>}
                        </Check>
                      )}
                      {p.glyph === 'font' && <ValueGlyph>A</ValueGlyph>}
                      {p.glyph === 'cursor' && (
                        <ValueGlyph>
                          <svg width="12" height="18" viewBox="0 0 12 18">
                            <path d="M2 1.5 V14 L5 11 L7.5 16.5 L9.5 15.5 L7 10.5 H11 Z" fill="#fff" stroke="#333" strokeWidth="1" />
                          </svg>
                        </ValueGlyph>
                      )}
                      {p.value}
                    </PropValue>
                  </PropRow>
                );
              })}
            </PropPane>
            <Scroll>
              <PropThumb />
            </Scroll>
          </PropBody>
        </RightCol>
      </Body>
      <TourBar>
        <TourText>Would you like to take a quick UI tour? This tour highlights important user interface elements and shows how they are used. To take the tour later, select Help &gt; UI Tour.</TourText>
        <TourButton $w={110} $gap={8}>Take UI Tour</TourButton>
        <TourButton $w={149} $gap={10}>Do Not Show Again</TourButton>
        <TourClose viewBox="0 0 12 12"><path d="M1.5 1.5 L10.5 10.5 M10.5 1.5 L1.5 10.5" stroke="#222" strokeWidth="1.3" /></TourClose>
      </TourBar>
      <Watermark>CSDN @bingo691</Watermark>
    </Page>
  );
}
